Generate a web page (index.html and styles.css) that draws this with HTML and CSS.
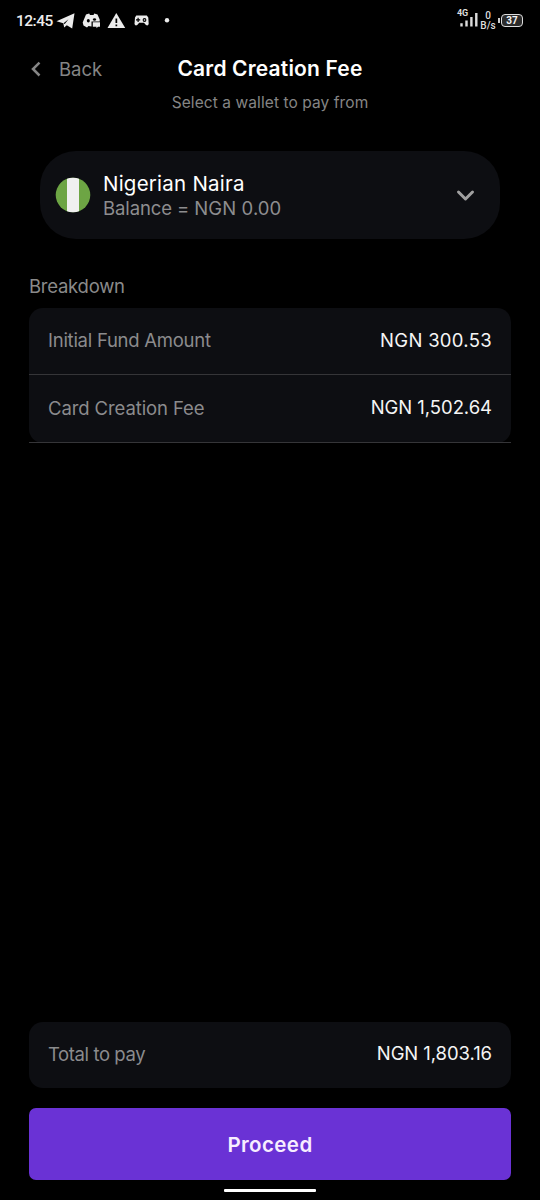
FILE: index.html
```html
<!DOCTYPE html>
<html lang="en">
<head>
<meta charset="utf-8">
<title>Card Creation Fee</title>
<link rel="stylesheet" href="styles.css">
</head>
<body>
<div class="status">
  <span class="clock">12:45</span>
  <svg class="status-icons" width="118" height="20" viewBox="0 0 118 20" fill="#ececec">
    <path d="M.5 11.200 18.500 3.200 16.200 18.500 10.800 15.200 8.200 17.500 7.300 13.300Z"/>
    <path d="M7.500 13.300 12.500 9.300 8.700 14Z" fill="#000"/>
    <path d="M30 4.500 33.200 3.500 34 5h3.500l.8-1.500 3.200 1 2.200 5v2h-8.200v5l-3-.5-1.500 1.500-3.500-2-.8-3Z"/>
    <ellipse cx="32.300" cy="10.700" rx="1.500" ry="1.700" fill="#000"/><ellipse cx="38.500" cy="9.500" rx="1.600" ry="1.300" fill="#000"/>
    <path d="M36.800 12.300h7.200v4.500h-2l-1.500 1.500v-1.500h-3.700Z"/>
    <path d="M60.300 3 69.200 18H51.500Z"/>
    <path d="M59.500 8.500h1.700v4.500h-1.700zM59.500 14.500h1.700v1.800h-1.700z" fill="#000"/>
    <path d="M80.300 5.500h10.500l1.500 2 .4 6.500q-.8 2.500-3 .8l-1.700-2h-4.800l-1.700 2q-2.200 1.700-3-.8l.5-6.500Z"/>
    <path d="M80 9.300h1.500V7.800h1.200v1.500h1.500v1.200h-1.500V12h-1.200v-1.500H80z" fill="#000"/>
    <circle cx="88.500" cy="10" r="1.900" fill="#000"/><circle cx="88.500" cy="10" r=".8"/>
    <circle cx="111" cy="10.200" r="2.200"/>
  </svg>
  <div class="signal">
    <span class="network">4G</span>
    <svg width="18" height="14" viewBox="0 0 18 14" fill="#ddd"><path d="M.3 10.200h2.400v3.300H.3zM5.300 7.500h2.400v6H5.300zM10.200 4h2.400v9.500h-2.400zM15.100 0h2.400v13.500h-2.400z"/></svg>
  </div>
  <div class="speed"><span>0</span><span>B/s</span></div>
  <div class="battery"><span>37</span></div>
</div>
<header class="header">
  <div class="nav">
    <svg class="back-icon" width="12" height="18" viewBox="0 0 12 18" fill="none" stroke="#858585" stroke-width="2.500"><path d="M9.500 2.700 3 9l6.500 6.500"/></svg>
    <span class="back">Back</span>
    <h1 class="title">Card Creation Fee</h1>
  </div>
  <p class="subtitle">Select a wallet to pay from</p>
</header>
<main class="main">
  <section class="wallet">
    <svg class="flag" width="36" height="36" viewBox="0 0 36 36"><clipPath id="flag"><circle cx="18" cy="18" r="17.300"/></clipPath><g clip-path="url(#flag)"><path fill="#6da544" d="M0 0h36v36H0z"/><path fill="#f0f0f0" d="M12 0h12v36H12z"/></g></svg>
    <div class="wallet-text">
      <span class="wallet-name">Nigerian Naira</span>
      <span class="balance">Balance = <span class="balance-value">NGN 0.00</span></span>
    </div>
    <svg class="chevron" width="20" height="14" viewBox="0 0 20 14" fill="none" stroke="#a0a0a0" stroke-width="3" stroke-linecap="round" stroke-linejoin="round"><path d="m2.500 4 7 7 7-7"/></svg>
  </section>
  <h2 class="section-title">Breakdown</h2>
  <section class="breakdown">
    <div class="row"><span class="label initial">Initial Fund Amount</span><span class="amount initial-amount">NGN 300.53</span></div>
    <div class="row"><span class="label fee">Card Creation Fee</span><span class="amount fee-amount">NGN 1,502.64</span></div>
  </section>
</main>
<footer class="footer">
  <div class="total"><span class="label total-label">Total to pay</span><span class="amount total-amount">NGN 1,803.16</span></div>
  <button class="proceed">Proceed</button>
  <div class="home"></div>
</footer>
</body>
</html>
```
FILE: styles.css
```css
* { box-sizing: border-box; }
body {
  margin: 0;
  height: 1200px;
  display: flex;
  flex-direction: column;
  background: #000;
  color: #f5f5f5;
  font-family: Inter, "Liberation Sans", sans-serif;
  font-size: 18.500px;
  white-space: nowrap;
  overflow: hidden;
}
h1, h2, p { margin: 0; font-weight: 400; }
.status { height: 42px; display: flex; padding: 10px 16px 0; }
.clock { flex: none; font: 500 15.500px/22px Roboto, sans-serif; letter-spacing: -0.5px; width: 40px; color: #ececec; }
.status-icons { flex: none; }
.signal { flex: none; width: 22px; margin-left: 280px; display: flex; flex-direction: column; align-items: flex-end; position: relative; padding-top: 3px; }
.network { position: absolute; left: 1px; top: -1px; font: 700 9px/8px Roboto, sans-serif; letter-spacing: -0.2px; color: #ddd; }
.speed { flex: none; width: 16px; margin-left: 3px; display: flex; flex-direction: column; align-items: center; font: 500 10px/9.500px Roboto, sans-serif; color: #ddd; padding-top: 1px; }
.battery { flex: none; display: flex; align-items: center; justify-content: center; position: relative; width: 22px; height: 13px; margin: 4px 0 0 6px; border: 1.500px solid #ddd; border-radius: 4px; background: #2b2b2b; font: 700 10px/10px Roboto, sans-serif; }
.battery::before { content: ""; position: absolute; left: -4px; top: 3px; width: 1.500px; height: 5px; background: #ccc; }
.header { height: 109px; }
.nav { height: 53px; display: grid; grid-template-columns: 29px 1fr; align-items: center; padding-left: 30px; position: relative; }
.back { color: #858585; }
.title { position: absolute; inset: 0; text-align: center; font-size: 21px; line-height: 53px; font-weight: 600; letter-spacing: 0.17px; color: #fff; }
.subtitle { text-align: center; font-size: 15.500px; line-height: 16px; letter-spacing: 0.08px; color: #858585; }
.main { flex: 1; padding: 0 29px; }
.wallet { margin: 0 11px; height: 88px; border-radius: 36px; background: #0d0e12; display: flex; align-items: center; padding: 0 24px 0 15px; }
.wallet-text { margin-left: 12px; padding-top: 2px; display: flex; flex-direction: column; align-items: flex-start; line-height: 25px; }
.wallet-name { font-size: 20.500px; letter-spacing: 0.23px; color: #fff; }
.balance { color: #8d8d8f; letter-spacing: -0.1px; }
.balance-value { letter-spacing: 0.1px; }
.chevron { margin-left: auto; }
.section-title { height: 69px; padding-top: 35px; font-size: 18.500px; line-height: 24px; letter-spacing: -0.25px; color: #8a8a8a; }
.breakdown { height: 135px; background: #0d0e12; border-radius: 14px; }
.row { height: 67px; padding: 0 19px 2px; display: flex; align-items: center; justify-content: space-between; border-bottom: 1px solid #353538; }
.row + .row { height: 68px; }
.label { color: #8b8b8d; }
.initial { letter-spacing: -0.26px; }
.fee { letter-spacing: -0.1px; }
.initial-amount { letter-spacing: 0.3px; }
.amount { color: #f5f5f5; }
.fee-amount { letter-spacing: -0.05px; padding-bottom: 2px; }
.footer { height: 179px; padding: 0 29px; }
.total { height: 66px; margin-top: 1px; border-radius: 14px; padding: 0 19px 2px; background: #0d0e12; display: flex; align-items: center; justify-content: space-between; }
.total-label { letter-spacing: -0.4px; }
.total-amount { letter-spacing: -0.08px; padding-bottom: 2px; }
.proceed { display: block; width: 100%; height: 72px; margin-top: 20px; border: 0; border-radius: 7px; background: #6a32d5; color: #f7edff; font: 600 20.500px/74px Inter, sans-serif; letter-spacing: 0.4px; padding: 0; }
.signal { margin-left: 282px; }
.speed { margin-left: 2px; }
.battery { margin-left: 5px; }
.home { width: 92px; height: 3px; margin: 9px auto 0; background: #fff; border-radius: 1px; }
```
